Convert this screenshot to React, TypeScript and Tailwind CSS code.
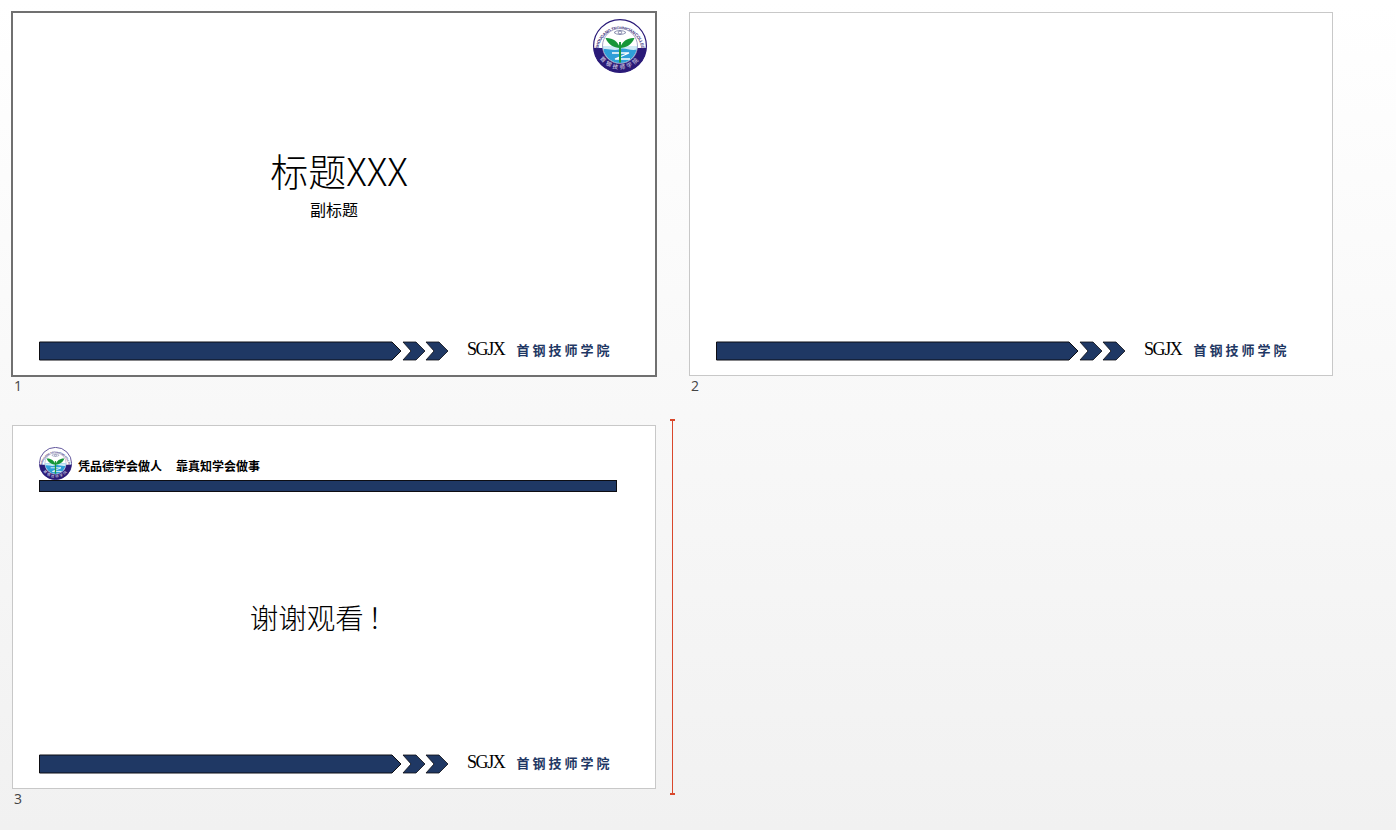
import { ReactNode } from 'react'

const cjk = "font-['Noto_Sans_CJK_SC','Liberation_Sans',sans-serif]"

function SchoolLogo({ className, id }: { className: string; id: string }) {
  return (
    <svg viewBox="0 0 54 54" className={className}>
      <defs>
        <path id={`${id}-arc`} d="M5.5 30 A21.6 21.6 0 0 1 48.5 30" fill="none" />
        <path id={`${id}-low`} d="M4 33 A24 24 0 0 0 50 33" fill="none" />
        <clipPath id={`${id}-bottom`}>
          <rect x="0" y="29" width="54" height="25" />
        </clipPath>
        <clipPath id={`${id}-inner`}>
          <circle cx="27" cy="27" r="17" />
        </clipPath>
      </defs>
      <circle cx="27" cy="27" r="26.4" fill="#fff" stroke="#2a1a78" strokeWidth="1.2" />
      <circle cx="27" cy="27" r="26.5" fill="#2a1a78" clipPath={`url(#${id}-bottom)`} />
      <text fontSize="4.4" fill="#3b3480" fontFamily="Liberation Sans, sans-serif" fontWeight="700">
        <textPath href={`#${id}-arc`} textLength="66">
          SHOUGANG TECHNICIAN COLLEGE
        </textPath>
      </text>
      <circle cx="27" cy="27" r="17.5" fill="#fff" stroke="#8f8bb5" strokeWidth="0.8" />
      <g clipPath={`url(#${id}-inner)`}>
        <rect x="8" y="27" width="38" height="19" fill="#2f9fd8" />
        <path d="M8 27 H46 V30 C38 33 32 28 27 30 C20 33 14 28 8 31 Z" fill="#cfeaf6" />
        <path d="M19 34 H36 L22 40 H37" fill="none" stroke="#fff" strokeWidth="1.3" />
      </g>
      <path d="M21 13.5 A7 4 0 0 1 33 13.5 A7 4 0 0 1 21 13.5 Z" fill="none" stroke="#8a8fb0" strokeWidth="1" />
      <circle cx="27" cy="13.5" r="1.6" fill="none" stroke="#6b6f98" strokeWidth="0.8" />
      <path d="M27 43.5 V23" stroke="#1d9a3c" strokeWidth="2" />
      <path d="M27 29 C21 29 15 25.5 12.5 19 C19 18.5 25 22 27 29 Z" fill="#169638" />
      <path d="M27 29 C33 29 39 25.5 41.5 19 C35 18.5 29 22 27 29 Z" fill="#169638" />
      <text fontSize="5.6" fill="#e8e6f6" fontFamily="Noto Sans CJK SC, sans-serif">
        <textPath href={`#${id}-low`} startOffset="50%" textAnchor="middle" letterSpacing="2.2">
          首钢技师学院
        </textPath>
      </text>
    </svg>
  )
}

function Footer() {
  return (
    <div className="flex items-center pl-[26px] pb-[14px]">
      <svg viewBox="0 0 410 20" className="h-5 w-[410px] shrink-0">
        <path d="M0.5 1 H353 L362 10 L353 19 H0.5 Z" fill="#1f3864" stroke="#0d0d12" strokeWidth="1" />
        <path d="M364 1 H377 L386 10 L377 19 H364 L372 10 Z" fill="#1f3864" stroke="#0d0d12" strokeWidth="0.8" />
        <path d="M387 1 H400 L409 10 L400 19 H387 L395 10 Z" fill="#1f3864" stroke="#0d0d12" strokeWidth="0.8" />
      </svg>
      <span className="ml-[18px] -mt-[5px] font-['Liberation_Serif',serif] text-[18px] leading-5 tracking-[-1.4px] text-black">
        SGJX
      </span>
      <span className={`ml-[12px] -mt-[3px] text-[13px] font-bold leading-5 tracking-[3px] text-[#1f3864] ${cjk}`}>
        首钢技师学院
      </span>
    </div>
  )
}

function Slide({ num, selected, children }: { num: number; selected?: boolean; children?: ReactNode }) {
  return (
    <div className="w-[644px]">
      <div
        className={
          selected
            ? 'relative flex h-[364px] flex-col border border-[#707070] bg-white ring-1 ring-[#707070]'
            : 'relative flex h-[364px] flex-col border border-[#c8c8c8] bg-white'
        }
      >
        <div className="flex min-h-0 flex-1 flex-col">{children}</div>
        <Footer />
      </div>
      <div className="h-[21px] pl-[2px] font-['Open_Sans',sans-serif] text-[14px] leading-[19px] text-[#444]">
        {num}
      </div>
    </div>
  )
}

export default function App() {
  return (
    <div className="relative h-[830px] w-[1396px] overflow-hidden bg-gradient-to-b from-white to-[#f1f1f1] pl-[12px] pt-[12px]">
      <div className="grid grid-cols-[644px_644px] gap-x-[33px] gap-y-[28px]">
        <Slide num={1} selected>
          <SchoolLogo id="a" className="absolute right-[8px] top-[6px] h-[54px] w-[54px]" />
          <div className="flex flex-col items-center pt-[134px]">
            <h1 className={`pl-[10px] text-[38px] font-light leading-[46px] text-black ${cjk}`}>标题XXX</h1>
            <p className={`mt-[4px] text-[16px] font-normal leading-6 text-black ${cjk}`}>副标题</p>
          </div>
        </Slide>
        <Slide num={2} />
        <Slide num={3}>
          <div className="px-[26px] pt-[21px]">
            <div className="flex items-center">
              <SchoolLogo id="b" className="h-[33px] w-[33px]" />
              <span className={`ml-[6px] mt-[5px] text-[12px] font-bold leading-4 text-black ${cjk}`}>
                凭品德学会做人
              </span>
              <span className={`ml-[14px] mt-[5px] text-[12px] font-bold leading-4 text-black ${cjk}`}>
                靠真知学会做事
              </span>
            </div>
            <div className="h-[12px] w-[578px] border border-[#0d0d12] bg-[#1f3864]" />
          </div>
          <div className="flex flex-1 items-center justify-center pb-3 pr-[22px]">
            <p className={`text-[28.5px] font-light leading-9 text-black ${cjk}`}>
              谢谢观看<span className="ml-[4px]">！</span>
            </p>
          </div>
        </Slide>
      </div>
      {/* insertion marker */}
      <div className="absolute left-[670px] top-[419px] flex h-[376px] w-[5px] flex-col items-center justify-between bg-[linear-gradient(#d9472b,#d9472b)] bg-[length:1px_100%] bg-center bg-no-repeat">
        <div className="h-[2px] w-[5px] bg-[#d9472b]" />
        <div className="h-[2px] w-[5px] bg-[#d9472b]" />
      </div>
    </div>
  )
}
